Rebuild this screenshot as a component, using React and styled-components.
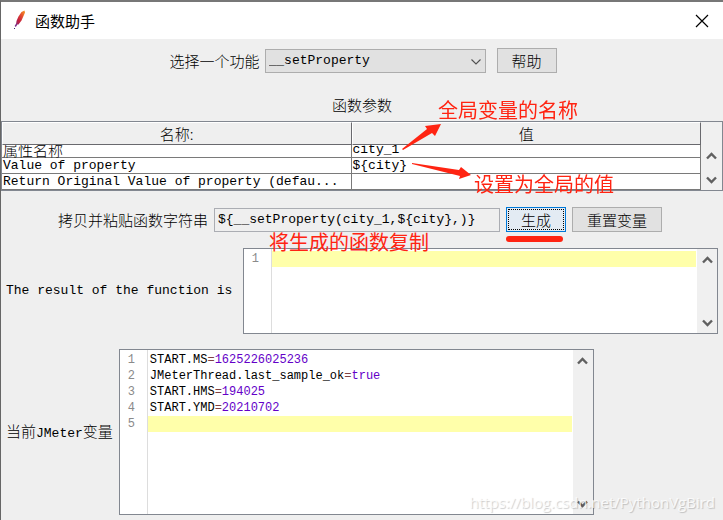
import { useLayoutEffect, useRef, useState } from "react";
import styled, { createGlobalStyle } from "styled-components";

const params = [
  { name: "属性名称", value: "city_1" },
  { name: "Value of property", value: "${city}" },
  { name: "Return Original Value of property (defau...", value: "" },
];

const variables = [
  { name: "START.MS", value: "1625226025236" },
  { name: "JMeterThread.last_sample_ok", value: "true" },
  { name: "START.HMS", value: "194025" },
  { name: "START.YMD", value: "20210702" },
];

function Feather() {
  return (
    <svg width="14" height="22" viewBox="0 0 14 22" aria-hidden="true">
      <defs>
        <linearGradient id="feather" x1="1" y1="0" x2="0" y2="1">
          <stop offset="0" stopColor="#f7a020" />
          <stop offset="0.35" stopColor="#e5512d" />
          <stop offset="0.7" stopColor="#c4203f" />
          <stop offset="1" stopColor="#8a2a70" />
        </linearGradient>
      </defs>
      <path d="M12.5 0.5 L9.5 2 L6.5 6.5 L4.5 11 L4 14.5 L6.5 14.5 L9.5 10.5 L11.5 6 L13 2.5 Z" fill="url(#feather)" />
      <path d="M4.8 14 L3.2 16.5" stroke="#7a2c86" strokeWidth="1.4" />
      <rect x="2" y="18" width="1" height="1" fill="#3c2a78" />
    </svg>
  );
}

function Chevron({ down }) {
  return (
    <svg width="11" height="8" viewBox="0 0 11 8" aria-hidden="true">
      <path d={down ? "M1 1.5 L5.5 6 L10 1.5" : "M1 6.5 L5.5 2 L10 6.5"} fill="none" stroke="#606060" strokeWidth="2.4" />
    </svg>
  );
}

function ScrollBar({ corner }) {
  return (
    <Track $corner={corner}>
      <ArrowButton type="button" aria-label="向上"><Chevron /></ArrowButton>
      <ArrowButton type="button" aria-label="向下"><Chevron down /></ArrowButton>
    </Track>
  );
}

function ParamTable() {
  const view = useRef(null);

  // the list opens scrolled to its last row
  useLayoutEffect(() => {
    view.current.scrollTop = view.current.scrollHeight;
  }, []);

  return (
    <TablePanel>
      <TableView ref={view}>
        <Table>
          <thead>
            <tr>
              <Th>名称:</Th>
              <Th>值</Th>
            </tr>
          </thead>
          <tbody>
            {params.map((p) => (
              <tr key={p.name}>
                <Td $cjk={p.name === "属性名称"}>{p.name}</Td>
                <Td>{p.value}</Td>
              </tr>
            ))}
          </tbody>
        </Table>
      </TableView>
      <ScrollBar corner />
    </TablePanel>
  );
}

function Editor({ lines, children, ...rest }) {
  return (
    <EditorBox {...rest}>
      <Gutter>
        {Array.from({ length: lines }, (_, i) => <span key={i}>{i + 1}</span>)}
      </Gutter>
      {children}
      <ScrollBar />
    </EditorBox>
  );
}

export default function App() {
  const [func, setFunc] = useState("__setProperty");
  const [text, setText] = useState("${__setProperty(city_1,${city},)}");
  const [result, setResult] = useState("");

  return (
    <>
      <GlobalStyle />
      <Window>
        <TitleBar>
          <Feather />
          <Title>函数助手</Title>
          <Close type="button" aria-label="关闭">
            <svg width="14" height="14" viewBox="0 0 14 14" aria-hidden="true">
              <path d="M1 1 L13 13 M13 1 L1 13" stroke="#000" strokeWidth="1.2" />
            </svg>
          </Close>
        </TitleBar>

        <FunctionRow>
          <label htmlFor="func">选择一个功能</label>
          <SelectWrap>
            <Select id="func" value={func} onChange={(e) => setFunc(e.target.value)}>
              <option>__setProperty</option>
            </Select>
            <svg width="12" height="8" viewBox="0 0 12 8" aria-hidden="true">
              <path d="M1.5 1.5 L6 6 L10.5 1.5" fill="none" stroke="#505050" strokeWidth="1.1" />
            </svg>
          </SelectWrap>
          <Button type="button">帮助</Button>
        </FunctionRow>

        <Heading>
          函数参数
          <Note $left={106} $top={1}>全局变量的名称</Note>
        </Heading>

        <Annotated>
          <ParamTable />
          <Arrows viewBox="0 0 80 60" aria-hidden="true">
            <path d="M2 28 L27 8 L25 5 L41 3 L35 15 L32 12 L3 29 Z" />
            <path d="M12 42 L59 49 L61 46 L71 54 L59 58 L60 55 L12 43 Z" />
          </Arrows>
          <Note $left={473} $top={51}>设置为全局的值</Note>
        </Annotated>

        <StringRow>
          <label htmlFor="text">拷贝并粘贴函数字符串</label>
          <TextField id="text" value={text} onChange={(e) => setText(e.target.value)} />
          <Marked>
            <Button type="button" $focused>生成</Button>
          </Marked>
          <Button type="button">重置变量</Button>
        </StringRow>

        <EditorRow>
          <ResultLabel htmlFor="result">The result of the function is</ResultLabel>
          <Editor lines={1}>
            <ResultArea id="result" rows={5} value={result} onChange={(e) => setResult(e.target.value)} />
          </Editor>
          <Note $left={268} $top={-18}>将生成的函数复制</Note>
        </EditorRow>

        <EditorRow $last>
          <span id="vars">当前<Mono>JMeter</Mono>变量</span>
          <Editor lines={variables.length + 1} $basis={475}>
            <Code role="textbox" aria-multiline="true" aria-labelledby="vars" tabIndex={0}>
              {variables.map((v) => (
                <Line key={v.name}>
                  {v.name}<Equals>=</Equals><Value>{v.value}</Value>
                </Line>
              ))}
              <Line $current />
            </Code>
          </Editor>
        </EditorRow>

        <Watermark>https://blog.csdn.net/PythonVgBird</Watermark>
      </Window>
    </>
  );
}

const cjk = `"Noto Sans CJK SC", sans-serif`;
const mono = `"Liberation Mono", "Noto Sans CJK SC", monospace`;

const GlobalStyle = createGlobalStyle`
  * {
    box-sizing: border-box;
  }
  body {
    margin: 0;
    background: #efefef;
    font-family: ${cjk};
    font-size: 15px;
    font-weight: 300;
    line-height: 16px;
    color: #000;
  }
  button, input, select, textarea {
    margin: 0;
    font: inherit;
    color: inherit;
    border-radius: 0;
    outline: none;
  }
`;

const Window = styled.main`
  position: relative;
  min-height: 100vh;
  border-top: 2px solid #777;
  border-left: 1px solid #666;
  background: #efefef;
  overflow: hidden;
`;

const TitleBar = styled.header`
  display: flex;
  align-items: center;
  height: 37px;
  padding: 0 14px 0 11px;
  background: #fff;
`;

const Title = styled.h1`
  flex: 1;
  margin: 0 0 0 9px;
  font-size: 15px;
  font-weight: 400;
`;

const Close = styled.button`
  display: flex;
  padding: 0;
  border: 0;
  background: none;
`;

const Row = styled.div`
  display: flex;
  align-items: center;
  justify-content: center;
  white-space: nowrap;
`;

const FunctionRow = styled(Row)`
  gap: 5px;
  padding: 9px 0 0 2px;

  > button {
    margin-left: 6px;
  }
`;

const SelectWrap = styled.div`
  position: relative;
  width: 221px;

  svg {
    position: absolute;
    right: 4px;
    top: 9px;
    pointer-events: none;
  }
`;

const Select = styled.select`
  appearance: none;
  display: block;
  width: 100%;
  height: 24px;
  padding: 0 20px 0 3px;
  border: 1px solid #adadad;
  background: #e1e1e1;
  font-family: ${mono};
  font-size: 13px;
`;

const Button = styled.button`
  height: 25px;
  padding: 0 14px;
  border: 1px solid ${(p) => (p.$focused ? "#0078d7" : "#adadad")};
  background: ${(p) => (p.$focused ? "#e3ebf3" : "#e1e1e1")};
  outline: ${(p) => (p.$focused ? "1px dotted #000" : "none")};
  outline-offset: -3px;
  line-height: 16px;
`;

const Heading = styled.h2`
  position: relative;
  width: 60px;
  margin: 24px auto 8px;
  font-size: 15px;
  font-weight: 300;
  white-space: nowrap;
`;

const Note = styled.span`
  position: absolute;
  left: ${(p) => p.$left}px;
  top: ${(p) => p.$top}px;
  z-index: 2;
  color: #ff2412;
  font-size: 20px;
  font-weight: 400;
  line-height: 24px;
  white-space: nowrap;
`;

const Annotated = styled.section`
  position: relative;
`;

const Arrows = styled.svg`
  position: absolute;
  left: 399px;
  top: 0;
  z-index: 2;
  width: 80px;
  height: 60px;
  fill: #ff2412;
`;

const TablePanel = styled.div`
  display: flex;
  border: 1px solid #828790;
`;

const TableView = styled.div`
  flex: 1;
  max-height: 68px;
  overflow: auto;
  scrollbar-width: none;
`;

const Table = styled.table`
  width: 100%;
  table-layout: fixed;
  border-collapse: separate;
  border-spacing: 0;
  background: #fff;
`;

const Th = styled.th`
  position: sticky;
  top: 0;
  height: 23px;
  padding: 0;
  border: 1px solid #69696e;
  border-top-color: #fff;
  border-left-color: #fff;
  background: #efefef;
  font-weight: 300;
`;

const Td = styled.td`
  height: 16px;
  padding: 0 1px;
  border-right: 1px solid #7a7a7a;
  border-bottom: 1px solid #7a7a7a;
  font-family: ${(p) => (p.$cjk ? cjk : mono)};
  font-size: ${(p) => (p.$cjk ? 15 : 13)}px;
  line-height: 15px;
  white-space: nowrap;
`;

const Track = styled.div`
  display: flex;
  flex-direction: column;
  justify-content: space-between;
  width: ${(p) => (p.$corner ? 21 : 20)}px;
  padding-top: ${(p) => (p.$corner ? 23 : 0)}px;
  background: #f0f0f0;
`;

const ArrowButton = styled.button`
  display: flex;
  align-items: center;
  justify-content: center;
  height: 21px;
  padding: 0;
  border: 0;
  background: none;
`;

const StringRow = styled(Row)`
  gap: 6px;
  padding: 16px 4px 16px 0;
`;

const TextField = styled.input`
  width: 286px;
  height: 24px;
  padding: 0 3px;
  border: 1px solid #abadb3;
  background: #efefef;
  font-family: ${mono};
  font-size: 13px;
`;

const Marked = styled.div`
  position: relative;

  &::after {
    content: "";
    position: absolute;
    left: 0;
    top: 29px;
    width: 57px;
    height: 6px;
    border-radius: 3px;
    background: #ff2412;
  }
`;

const EditorRow = styled(Row)`
  position: relative;
  justify-content: flex-start;
  gap: 6px;
  padding: 0 5px ${(p) => (p.$last ? 5 : 15)}px;
`;

const Mono = styled.span`
  font-family: ${mono};
  font-size: 13px;
`;

const ResultLabel = styled.label`
  min-width: 231px;
  font-family: ${mono};
  font-size: 13px;
`;

const EditorBox = styled.div`
  display: flex;
  flex: ${(p) => (p.$basis ? `0 1 ${p.$basis}px` : "1")};
  border: 1px solid #828790;
  background: #fff;
  font-family: ${mono};
  font-size: 12px;
`;

const Gutter = styled.div`
  display: flex;
  flex-direction: column;
  width: 28px;
  padding: 2px 12px 0 0;
  border-right: 1px solid #ddd;
  color: #8a8a8a;
  text-align: right;
`;

const ResultArea = styled.textarea`
  flex: 1;
  min-width: 0;
  margin: 2px 1px 2px 0;
  padding: 0 2px;
  border: 0;
  resize: none;
  overflow: hidden;
  background: linear-gradient(#ffffaa, #ffffaa) 0 0 / 100% 16px no-repeat;
`;

const Code = styled.div`
  flex: 1;
  min-width: 0;
  min-height: 164px;
  padding: 2px 1px 2px 0;
  outline: none;
`;

const Line = styled.div`
  height: 16px;
  padding-left: 2px;
  background: ${(p) => (p.$current ? "#ffffaa" : "none")};
`;

const Equals = styled.span`
  color: #804040;
`;

const Value = styled.span`
  color: #6400c8;
`;

const Watermark = styled.div`
  position: absolute;
  right: 8px;
  bottom: 8px;
  color: rgba(255, 255, 255, 0.8);
  font-family: "Open Sans", sans-serif;
  font-size: 15px;
  font-weight: 400;
  line-height: 20px;
  text-shadow: 1px 1px 1px rgba(0, 0, 0, 0.2);
  pointer-events: none;
`;
